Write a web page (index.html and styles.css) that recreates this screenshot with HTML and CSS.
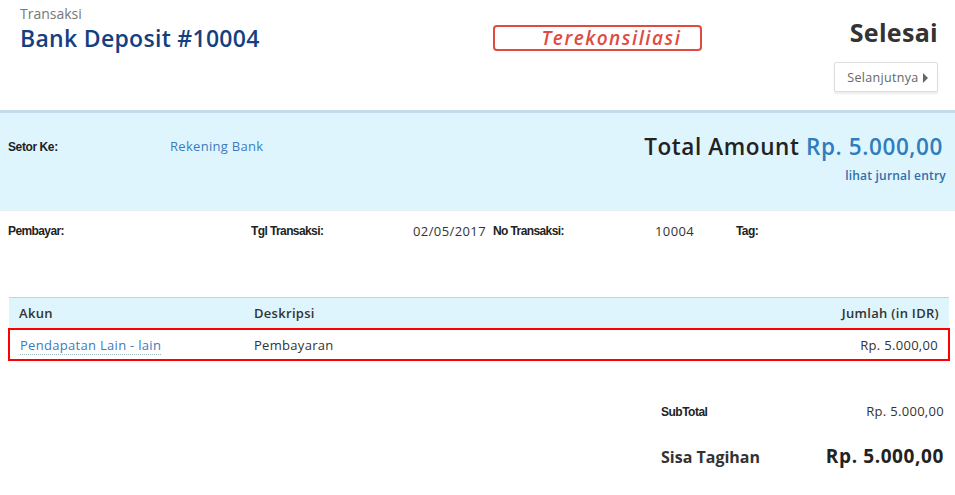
FILE: index.html
```html
<!DOCTYPE html>
<html lang="id">
<head>
    <meta charset="UTF-8">
    <title>Bank Deposit #10004</title>
    <link rel="stylesheet" href="styles.css">
</head>
<body>

<!-- Header -->
<div class="page-header">
    <div class="title-block">
        <div class="subtitle">Transaksi</div>
        <h1>Bank Deposit #10004</h1>
    </div>
    <div class="status-block">
        <span class="badge">Terekonsiliasi</span>
    </div>
    <div class="action-block">
        <div class="state">Selesai</div>
        <button class="next-btn">Selanjutnya <span class="caret"></span></button>
    </div>
</div>

<!-- Summary -->
<div class="summary">
    <div class="summary-left">
        <span class="label">Setor Ke:</span>
        <a class="link account">Rekening Bank</a>
    </div>
    <div class="summary-right">
        <div class="total">Total Amount <span class="amount">Rp. 5.000,00</span></div>
        <a class="journal">lihat jurnal entry</a>
    </div>
</div>

<!-- Info row -->
<div class="info-row">
    <div class="info info-payer"><span class="label">Pembayar:</span></div>
    <div class="info info-date"><span class="label">Tgl Transaksi:</span><span class="value">02/05/2017</span></div>
    <div class="info info-no"><span class="label">No Transaksi:</span><span class="value">10004</span></div>
    <div class="info info-tag"><span class="label">Tag:</span></div>
</div>

<!-- Lines -->
<table class="lines">
    <thead>
        <tr>
            <th class="col-account">Akun</th>
            <th class="col-desc">Deskripsi</th>
            <th class="col-amount">Jumlah (in IDR)</th>
        </tr>
    </thead>
    <tbody>
        <tr class="highlight">
            <td class="col-account"><a class="link dotted">Pendapatan Lain - lain</a></td>
            <td class="col-desc">Pembayaran</td>
            <td class="col-amount">Rp. 5.000,00</td>
        </tr>
    </tbody>
</table>

<!-- Totals -->
<div class="totals">
    <div class="totals-row sub">
        <span class="totals-label">SubTotal</span>
        <span class="totals-value">Rp. 5.000,00</span>
    </div>
    <div class="totals-row grand">
        <span class="totals-label">Sisa Tagihan</span>
        <span class="totals-value">Rp. 5.000,00</span>
    </div>
</div>

</body>
</html>
```

FILE: styles.css
```css
body {
    font-family: "Open Sans", Arial, sans-serif;
    margin: 0;
    padding: 0;
    background-color: #fff;
    color: #333;
    width: 955px;
    overflow: hidden;
}
a {
    cursor: pointer;
}

/* header */
.page-header {
    display: flex;
    align-items: flex-start;
    border-bottom: 3px solid #c2dde9;
    box-sizing: border-box;
    height: 113px;
}
.title-block {
    width: 473px;
    padding: 4px 0 0 20px;
}
.subtitle {
    font-size: 14px;
    color: #777;
    line-height: 19px;
}
h1 {
    margin: 0;
    font-size: 23px;
    font-weight: 600;
    color: #14407f;
    line-height: 31px;
    letter-spacing: 0.3px;
}
.status-block {
    padding-top: 25px;
}
.badge {
    display: block;
    width: 205px;
    height: 22px;
    border: 2px solid #e04a3f;
    border-radius: 4px;
    color: #e04a3f;
    font-style: italic;
    font-weight: 600;
    font-size: 19px;
    line-height: 22px;
    letter-spacing: 1.5px;
    text-align: center;
    text-indent: 28px;
    white-space: nowrap;
}
.action-block {
    flex: 1;
    display: flex;
    flex-direction: column;
    align-items: flex-end;
    padding: 14px 17px 0 0;
}
.state {
    font-size: 25px;
    font-weight: 700;
    color: #333;
    line-height: 36px;
    letter-spacing: 0.3px;
}
.next-btn {
    margin-top: 12px;
    height: 30px;
    padding: 0 9px 0 12px;
    background: #fff;
    border: 1px solid #ddd;
    border-radius: 2px;
    box-shadow: 0 2px 2px rgba(0, 0, 0, 0.08);
    font-family: inherit;
    font-size: 12.5px;
    letter-spacing: 0.3px;
    color: #666;
}
.caret {
    display: inline-block;
    width: 0;
    height: 0;
    border-left: 5px solid #666;
    border-top: 5px solid transparent;
    border-bottom: 5px solid transparent;
    vertical-align: -1px;
    margin-left: 1px;
}

/* summary */
.summary {
    display: flex;
    justify-content: space-between;
    height: 97px;
    background-color: #dff5fd;
    border-bottom: 1px solid #e8eef0;
}
.summary-left {
    display: flex;
    padding: 23px 0 0 8px;
}
.label {
    font-family: "Liberation Sans Narrow", "Liberation Sans", Arial, sans-serif;
    font-size: 12px;
    font-weight: 700;
    color: #222;
    letter-spacing: -0.4px;
}
.summary-left .label {
    width: 162px;
    line-height: 22px;
}
.link {
    color: #3a7bbf;
    font-size: 13px;
    letter-spacing: 0.3px;
}
.account {
    line-height: 20px;
}
.summary-right {
    display: flex;
    flex-direction: column;
    align-items: flex-end;
    padding: 18px 9px 0 0;
}
.total {
    font-size: 22.5px;
    font-weight: 600;
    color: #222;
    line-height: 31px;
    margin-right: 3px;
    letter-spacing: 0.6px;
}
.amount {
    color: #2f7dbd;
}
.journal {
    margin-top: 5px;
    font-size: 12px;
    font-weight: 600;
    color: #2f6eac;
    letter-spacing: 0.2px;
}

/* info row */
.info-row {
    display: flex;
    height: 86px;
    padding: 11px 0 0 8px;
    box-sizing: border-box;
}
.info {
    display: flex;
    font-size: 12px;
    line-height: 18px;
}
.info .label {
    letter-spacing: -0.6px;
}
.info-payer {
    width: 243px;
}
.info-date .label {
    width: 162px;
}
.info-date .value {
    width: 80px;
}
.info-no .label {
    width: 162px;
}
.info-no .value {
    width: 81px;
}
.value {
    color: #333;
    font-size: 13px;
    letter-spacing: 0.4px;
}

/* lines table */
.lines {
    width: 942px;
    margin-left: 8px;
    border-collapse: collapse;
    font-size: 13px;
    letter-spacing: 0.3px;
}
.lines thead tr {
    background-color: #dff5fd;
    border-top: 1px solid #b5d7e7;
}
.lines th {
    height: 30px;
    padding: 0;
    font-weight: 600;
    color: #333;
    text-align: left;
}
.lines td {
    height: 29px;
    padding: 0;
    color: #333;
}
.col-account {
    width: 234px;
    padding-left: 10px !important;
}
.lines .col-amount {
    text-align: right;
    padding-right: 10px;
}
.highlight td {
    border-top: 2px solid #f00;
    border-bottom: 2px solid #f00;
}
.highlight td:first-child {
    border-left: 2px solid #f00;
}
.highlight td:last-child {
    border-right: 2px solid #f00;
}
.dotted {
    border-bottom: 1px dotted #9bb;
}

/* totals */
.totals {
    margin: 41px 11px 0 661px;
}
.totals-row {
    display: flex;
    justify-content: space-between;
    align-items: baseline;
}
.sub .totals-label {
    font-family: "Liberation Sans", Arial, sans-serif;
    font-size: 12px;
    font-weight: 700;
    letter-spacing: -0.5px;
    color: #222;
}
.sub .totals-value {
    font-size: 13px;
    letter-spacing: 0.3px;
    color: #333;
}
.grand {
    margin-top: 23px;
}
.grand .totals-label {
    font-size: 16px;
    font-weight: 700;
    color: #333;
}
.grand .totals-value {
    font-size: 19px;
    font-weight: 700;
    color: #222;
    letter-spacing: 0.6px;
}
```
